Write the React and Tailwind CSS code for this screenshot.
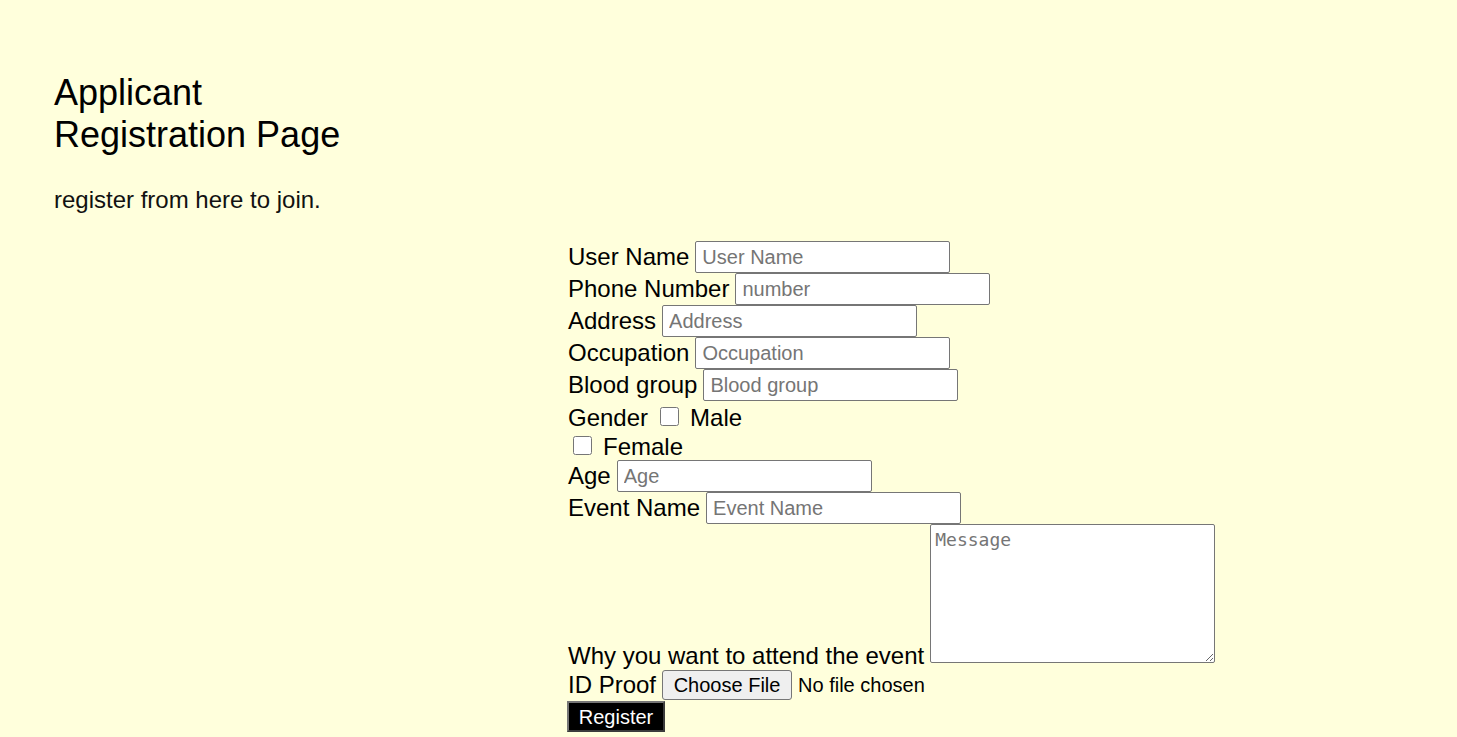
export default function App() {
  const font = { fontFamily: '"Liberation Sans", Arial, sans-serif' };
  const inputCls =
    "w-[255px] h-[32px] border border-[#767676] rounded-[2px] bg-white pl-[6px] text-[20px] text-black placeholder:text-[#757575] outline-none";
  return (
    <div
      className="min-h-[737px] w-full bg-[#ffffdc] text-black"
      style={font}
    >
      <div className="pt-[72px] pl-[54px]">
        <h1 className="text-[36px] leading-[42px] font-normal w-[300px]">
          Applicant Registration Page
        </h1>
        <p className="mt-[30px] text-[24px] leading-[28px] text-[#111]">
          register from here to join.
        </p>
      </div>
      <form className="pl-[568px] mt-[27px] text-[24px] pb-[5px]">
        <div className="flex items-center h-[32px] gap-[6px]">
          <span>User Name</span>
          <input className={inputCls} placeholder="User Name" />
        </div>
        <div className="flex items-center h-[32px] gap-[6px]">
          <span>Phone Number</span>
          <input className={inputCls} placeholder="number" />
        </div>
        <div className="flex items-center h-[32px] gap-[6px]">
          <span>Address</span>
          <input className={inputCls} placeholder="Address" />
        </div>
        <div className="flex items-center h-[32px] gap-[6px]">
          <span>Occupation</span>
          <input className={inputCls} placeholder="Occupation" />
        </div>
        <div className="flex items-center h-[32px] gap-[6px]">
          <span>Blood group</span>
          <input className={inputCls} placeholder="Blood group" />
        </div>
        <div className="flex items-center h-[30px] pt-[3px]">
          <span>Gender</span>
          <input
            type="checkbox"
            className="w-[19px] h-[19px] ml-[12px] mr-[11px] mt-[-3px]"
          />
          <span>Male</span>
        </div>
        <div className="flex items-center h-[29px] pt-[2px]">
          <input
            type="checkbox"
            className="w-[19px] h-[19px] ml-[5px] mr-[11px] mt-[-3px]"
          />
          <span>Female</span>
        </div>
        <div className="flex items-center h-[32px] gap-[6px]">
          <span>Age</span>
          <input className={inputCls} placeholder="Age" />
        </div>
        <div className="flex items-center h-[32px] gap-[6px]">
          <span>Event Name</span>
          <input className={inputCls} placeholder="Event Name" />
        </div>
        <div className="flex items-end gap-[6px]">
          <span className="leading-[27px]">Why you want to attend the event</span>
          <textarea
            className="w-[285px] h-[139px] mb-[6px] border border-[#767676] rounded-[2px] bg-white px-[4px] pt-[4px] text-[18px] leading-[22px] placeholder:text-[#757575] outline-none"
            style={{ fontFamily: '"DejaVu Sans Mono", monospace' }}
            placeholder="Message"
          />
        </div>
        <div className="flex items-center h-[32px]">
          <span>ID Proof</span>
          <button
            type="button"
            className="ml-[6px] w-[130px] h-[30px] bg-[#efefef] border border-[#767676] rounded-[3px] text-[20px] leading-none"
          >
            Choose File
          </button>
          <span className="ml-[6px] text-[20px]">No file chosen</span>
        </div>
        <button
          type="button"
          className="block w-[98px] h-[31px] bg-black text-white text-[20px] leading-none border-2 border-t-[#767676] border-l-[#767676] border-b-[#3b3b3b] border-r-[#3b3b3b] ml-[-1px]"
        >
          Register
        </button>
      </form>
    </div>
  );
}
